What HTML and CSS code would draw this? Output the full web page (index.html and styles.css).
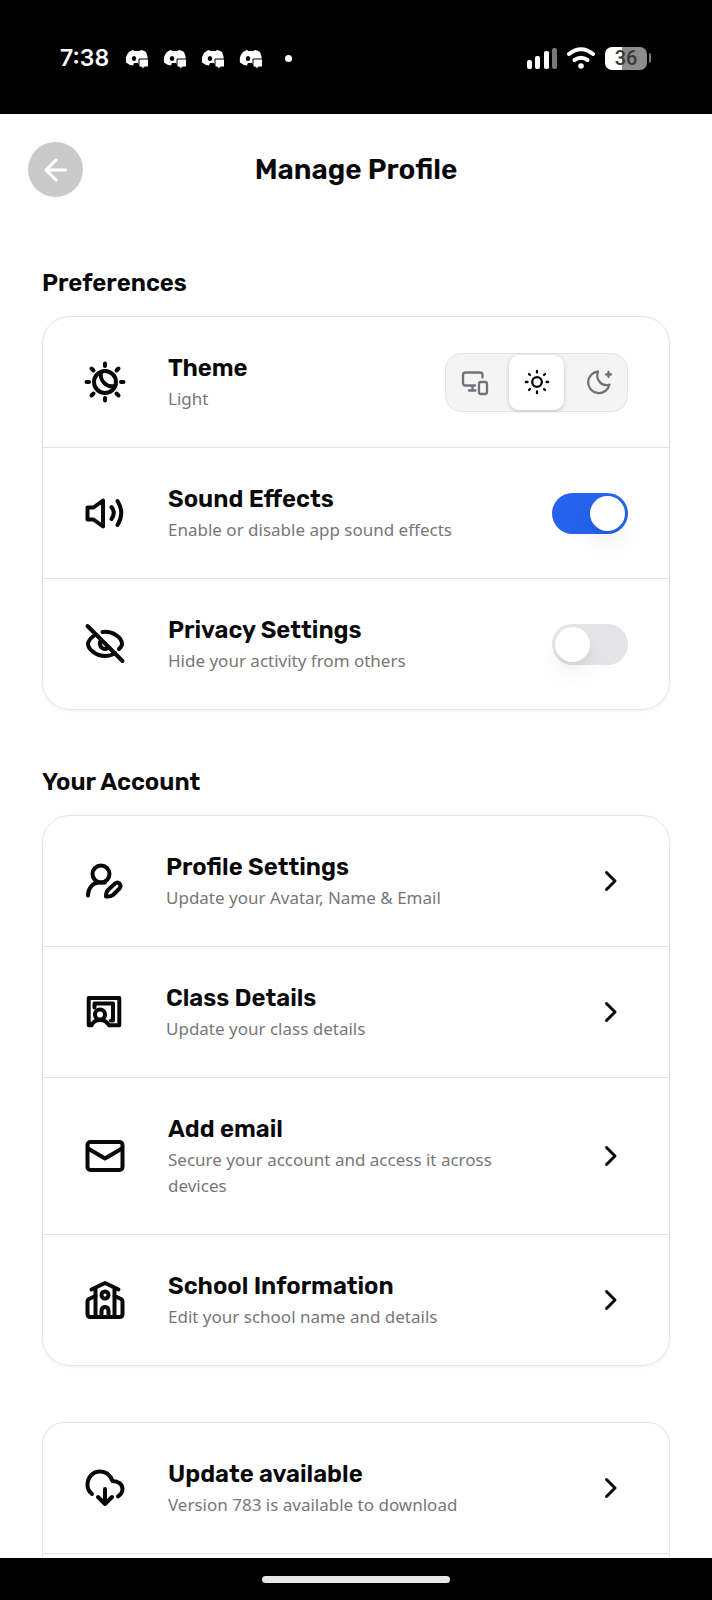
FILE: index.html
```html
<!DOCTYPE html>
<html lang="en">
<head>
  <meta charset="UTF-8">
  <meta name="viewport" content="width=device-width, initial-scale=1">
  <title>Manage Profile</title>
  <link rel="stylesheet" href="styles.css">
</head>
<body>

  <!-- shared shapes -->
  <svg class="defs" aria-hidden="true">
    <symbol id="chat" viewBox="0 0 24 21">
      <path fill="#fff" d="M8 2 9.500 3h5L16 2q3 .5 5 2 2 4 2 9H14v4l-1-2H9l-1 2.500q-4-.5-7-3Q0 8 4 4 6 2.500 8 2z"/>
      <ellipse cx="9" cy="10.500" rx="2.200" ry="2.500" fill="#000"/>
      <path fill="#fff" stroke="#000" d="M14 11h9.500v8h-4l-2 2-1-2H14z"/>
    </symbol>
    <symbol id="chevron" viewBox="0 0 34 34">
      <path d="m12.500 8.500 8.500 8.500-8.500 8.500"/>
    </symbol>
  </svg>

  <!-- STATUS BAR -->
  <div class="status-bar">
    <div class="status-left">
      <span class="time">7:38</span>
      <div class="notifications">
        <svg><use href="#chat"/></svg>
        <svg><use href="#chat"/></svg>
        <svg><use href="#chat"/></svg>
        <svg><use href="#chat"/></svg>
      </div>
      <span class="dot"></span>
    </div>
    <div class="status-right">
      <svg class="signal" viewBox="0 0 30 22" fill="#fff">
        <rect x="0" y="13" width="5" height="9" rx="2"/>
        <rect x="8" y="9" width="5" height="13" rx="2"/>
        <rect x="17" y="4" width="5" height="18" rx="2"/>
        <rect x="25" y="1" width="5" height="21" rx="2" fill="#777"/>
      </svg>
      <svg class="wifi" viewBox="0 0 28 22" fill="none" stroke="#fff" stroke-width="4" stroke-linecap="round">
        <path d="M2 7Q14-2.500 26 7"/>
        <path d="M7.500 13Q14 8.500 20.500 13"/>
        <circle cx="14" cy="19" r="2.800" fill="#fff" stroke="none"/>
      </svg>
      <div class="battery"><span class="battery-level">36</span></div>
    </div>
  </div>

  <!-- HEADER -->
  <header class="header">
    <button class="back" type="button" aria-label="Back">
      <svg viewBox="0 0 28 28"><path d="M23.500 14H4.500M14 4 4 14l10 10"/></svg>
    </button>
    <h1>Manage Profile</h1>
  </header>

  <main class="content">

    <section>
      <h2>Preferences</h2>
      <div class="card">
        <div class="row">
          <svg class="icon" viewBox="0 0 42 42">
            <circle cx="21" cy="21" r="11"/>
            <path d="M17 11.500C15.500 19 22 27 31 25"/>
            <path d="M21 2.500v2.500M21 37v2.500M2.500 21H5M37 21h2.500M7.500 7.500l2 2M32.500 32.500l2 2M7.500 34.500l2-2M32.500 9.500l2-2"/>
          </svg>
          <div class="text">
            <h3>Theme</h3>
            <p>Light</p>
          </div>
          <div class="segments" role="radiogroup" aria-label="Theme">
            <label class="segment">
              <input type="radio" name="theme" aria-label="System">
              <svg viewBox="0 0 28 28">
                <path d="M14 17.500H4.500Q2 17.500 2 15V7Q2 4.500 4.500 4.500H19Q21.500 4.500 21.500 7V9.500M11.500 17.500v5M8 22.500h6.500"/>
                <rect x="18" y="14" width="8" height="12" rx="2"/>
              </svg>
            </label>
            <label class="segment">
              <input type="radio" name="theme" aria-label="Light" checked>
              <svg viewBox="0 0 28 28">
                <circle cx="14" cy="14" r="4.800"/>
                <path d="M14 2.800v1.700M14 23.500v1.700M2.800 14h1.700M23.500 14h1.700M6 6l1 1M21 21l1 1M6 22l1-1M21 7l1-1"/>
              </svg>
            </label>
            <label class="segment">
              <input type="radio" name="theme" aria-label="Dark">
              <svg viewBox="0 0 28 28">
                <path d="M13 3.500A10.800 10.800 0 1 0 24.500 16.500C17 19 10 12 13 3.500z"/>
                <path d="M23.500 4v5M21 6.500h5"/>
              </svg>
            </label>
          </div>
        </div>

        <div class="row">
          <svg class="icon" viewBox="0 0 42 42">
            <path d="M3.500 15.500h6l9.500-7v26l-9.500-7h-6z"/>
            <path d="M27.500 15q4.500 6 0 12M33.500 9q7.500 12 0 24"/>
          </svg>
          <div class="text">
            <h3><label for="sound">Sound Effects</label></h3>
            <p>Enable or disable app sound effects</p>
          </div>
          <input class="toggle" type="checkbox" id="sound" checked>
        </div>

        <div class="row">
          <svg class="icon" viewBox="0 0 42 42">
            <path d="M3.500 3l35 35"/>
            <path d="M18.500 9C29 7.500 38 15 38 21q0 2-3 5M9.500 13Q4 17.500 4 21C4 26 12 33 21 33q6 0 10-3"/>
            <path d="M17 17q-2.500 4 .5 7.500 3.500 3 7.500 0"/>
          </svg>
          <div class="text">
            <h3><label for="privacy">Privacy Settings</label></h3>
            <p>Hide your activity from others</p>
          </div>
          <input class="toggle" type="checkbox" id="privacy">
        </div>
      </div>
    </section>

    <section>
      <h2>Your Account</h2>
      <div class="card">
        <a class="row" href="#profile">
          <svg class="icon icon-small" viewBox="0 0 40 40">
            <circle cx="17" cy="13" r="8.500"/>
            <path d="M4 34.500C4 27 9 21.500 15 21.500h6"/>
            <path d="M22 35.500q-.5-4 2-6.500l7-6.500q2.500-2 4.500 0 2 2.500 0 5l-6.500 6.500q-2.500 2-7 1.500z"/>
          </svg>
          <div class="text">
            <h3>Profile Settings</h3>
            <p>Update your Avatar, Name &amp; Email</p>
          </div>
          <svg class="chevron"><use href="#chevron"/></svg>
        </a>

        <a class="row" href="#class">
          <svg class="icon icon-small" viewBox="0 0 40 40">
            <path d="M4.700 6h30.600v27.300H25q-3-5.300-9-5.300t-8.500 5.300H4.700z"/>
            <circle cx="16" cy="22.500" r="5"/>
            <path d="M10.500 15.500v-4H29V28.500h-2"/>
          </svg>
          <div class="text">
            <h3>Class Details</h3>
            <p>Update your class details</p>
          </div>
          <svg class="chevron"><use href="#chevron"/></svg>
        </a>

        <a class="row" href="#email">
          <svg class="icon" viewBox="0 0 42 42">
            <rect x="3.500" y="7" width="35" height="28" rx="3"/>
            <path d="m4 13.500 17 10 17-10"/>
          </svg>
          <div class="text">
            <h3>Add email</h3>
            <p>Secure your account and access it across devices</p>
          </div>
          <svg class="chevron"><use href="#chevron"/></svg>
        </a>

        <a class="row" href="#school">
          <svg class="icon" viewBox="0 0 42 42">
            <path d="M7.500 10.500 21 4l13.500 6.500M11.500 9v29M30.500 9v29"/>
            <path d="M11.500 17 6 19.500q-2.500 1-2.500 3V35q0 3 3 3h29q3 0 3-3V22.500q0-2-2.500-3L30.500 17"/>
            <path d="M17.500 38v-6q0-4 3.500-4t3.500 4v6"/>
            <circle cx="21" cy="16" r="3.500"/>
          </svg>
          <div class="text">
            <h3>School Information</h3>
            <p>Edit your school name and details</p>
          </div>
          <svg class="chevron"><use href="#chevron"/></svg>
        </a>
      </div>
    </section>

    <section class="card card-open">
      <a class="row" href="#update">
        <svg class="icon" viewBox="0 0 42 42">
          <path d="M8 27Q3.500 23.500 3.500 18C3.500 10 9 4.500 16 4.500q9 0 12.500 9.500C34 14 38.500 17 38.500 22q0 4.500-4.500 7.500"/>
          <path d="M21 22v15M14 30l7 7 7-7"/>
        </svg>
        <div class="text">
          <h3>Update available</h3>
          <p>Version 783 is available to download</p>
        </div>
        <svg class="chevron"><use href="#chevron"/></svg>
      </a>
    </section>

  </main>

  <div class="home-bar"><span></span></div>

</body>
</html>
```

FILE: styles.css
```css
* {
  box-sizing: border-box;
}

body {
  margin: 0;
  height: 100vh;
  display: flex;
  flex-direction: column;
  background: #fff;
  color: #09090b;
  font-family: "Noto Sans", sans-serif;
}

h1, h2, h3, p {
  margin: 0;
}

h1, h2, h3 {
  font-family: Rubik, Inter, sans-serif;
  font-weight: 600;
}

svg {
  display: block;
  flex-shrink: 0;
}

.defs {
  display: none;
}

/* status bar */
.status-bar {
  display: flex;
  justify-content: space-between;
  flex-shrink: 0;
  height: 114px;
  padding: 46px 61px 44px 60px;
  background: #000;
  color: #fff;
}

.status-left,
.status-right,
.notifications {
  display: flex;
  align-items: center;
}

.time {
  font-family: Inter, sans-serif;
  font-size: 23px;
  font-weight: 600;
  margin-right: 16px;
}

.notifications {
  gap: 14px;
}

.notifications svg {
  width: 24px;
  height: 21px;
}

.dot {
  width: 7px;
  height: 7px;
  margin-left: 22px;
  border-radius: 50%;
  background: #fff;
}

.status-right {
  gap: 10px;
}

.signal {
  width: 30px;
  height: 22px;
}

.wifi {
  width: 28px;
  height: 22px;
}

.battery {
  display: flex;
  align-items: center;
  gap: 2px;
}

.battery-level {
  width: 42px;
  border-radius: 7px;
  background: linear-gradient(90deg, #fff 40%, #8c8c8c 40%);
  color: #3a3a3a;
  font: 500 20px/23px Roboto, sans-serif;
  text-align: center;
}

.battery::after {
  content: "";
  width: 2px;
  height: 10px;
  border-radius: 0 2px 2px 0;
  background: #777;
}

/* header */
.header {
  display: grid;
  grid-template-columns: 1fr auto 1fr;
  align-items: center;
  flex-shrink: 0;
  padding: 28px;
}

.header h1 {
  font-size: 28px;
  line-height: 36px;
}

.back {
  display: grid;
  place-items: center;
  width: 55px;
  height: 55px;
  padding: 0;
  border: none;
  border-radius: 50%;
  background: #cacaca;
  cursor: pointer;
}

.back svg {
  width: 28px;
  height: 28px;
  fill: none;
  stroke: #fff;
  stroke-width: 3;
  stroke-linecap: round;
  stroke-linejoin: round;
}

/* content */
.content {
  flex: 1;
  min-height: 0;
  padding: 40px 42px 0;
  overflow-y: auto;
  scrollbar-width: none;
}

h2 {
  font-size: 24px;
  line-height: 36px;
  margin-bottom: 15px;
}

.card {
  margin-bottom: 54px;
  border: 1px solid #e4e4e7;
  border-radius: 28px;
  box-shadow: 0 1px 3px rgba(0, 0, 0, 0.08);
}

.row {
  display: flex;
  align-items: center;
  gap: 42px;
  padding: 33px 41px;
  color: inherit;
  text-decoration: none;
}

.row + .row {
  border-top: 1px solid #e4e4e7;
}

.text {
  flex: 1;
  padding-bottom: 2px;
}

.text h3 {
  font-size: 24px;
  line-height: 36px;
}

.text p {
  max-width: 350px;
  color: #777;
  font-size: 17px;
  line-height: 26px;
}

.icon {
  width: 42px;
  height: 42px;
  fill: none;
  stroke: #09090b;
  stroke-width: 4;
  stroke-linecap: round;
  stroke-linejoin: round;
}

.icon-small {
  width: 40px;
  height: 40px;
}

.chevron {
  width: 34px;
  height: 34px;
  fill: none;
  stroke: #09090b;
  stroke-width: 3;
  stroke-linecap: round;
  stroke-linejoin: round;
}

/* theme switch */
.segments {
  display: flex;
  gap: 7px;
  padding: 1px;
  border: 1px solid #e4e4e7;
  border-radius: 16px;
  background: #f4f4f5;
}

.segment {
  display: grid;
  place-items: center;
  width: 55px;
  height: 55px;
  border-radius: 10px;
  cursor: pointer;
}

.segment input,
.segment svg {
  grid-area: 1 / 1;
}

.segment input {
  appearance: none;
  margin: 0;
}

.segment svg {
  width: 28px;
  height: 28px;
  fill: none;
  stroke: #71717a;
  stroke-width: 2.3;
  stroke-linecap: round;
  stroke-linejoin: round;
}

.segment:has(:checked) {
  background: #fff;
  box-shadow: 0 1px 4px rgba(0, 0, 0, 0.2);
}

.segment:has(:checked) svg {
  stroke: #09090b;
}

/* toggles */
.toggle {
  appearance: none;
  display: flex;
  width: 76px;
  height: 41px;
  margin: 0;
  padding: 3px;
  border-radius: 21px;
  background: #e4e4e7;
  cursor: pointer;
}

.toggle::before {
  content: "";
  width: 35px;
  height: 35px;
  border-radius: 50%;
  background: #fff;
  box-shadow: 0 14px 20px rgba(0, 0, 0, 0.05), 0 4px 6px rgba(0, 0, 0, 0.03);
}

.toggle:checked {
  justify-content: flex-end;
  background: #2463eb;
}

/* last card runs on below the fold */
.card-open {
  margin-top: 56px;
  margin-bottom: 0;
  border-radius: 22px 22px 0 0;
  border-bottom: none;
  box-shadow: none;
}

.card-open::after {
  content: "";
  display: block;
  height: 130px;
  border-top: 1px solid #e4e4e7;
}

/* home indicator */
.home-bar {
  display: grid;
  place-items: center;
  flex-shrink: 0;
  height: 42px;
  background: #000;
}

.home-bar span {
  width: 188px;
  height: 7px;
  border-radius: 4px;
  background: #e8e8e8;
}
```
